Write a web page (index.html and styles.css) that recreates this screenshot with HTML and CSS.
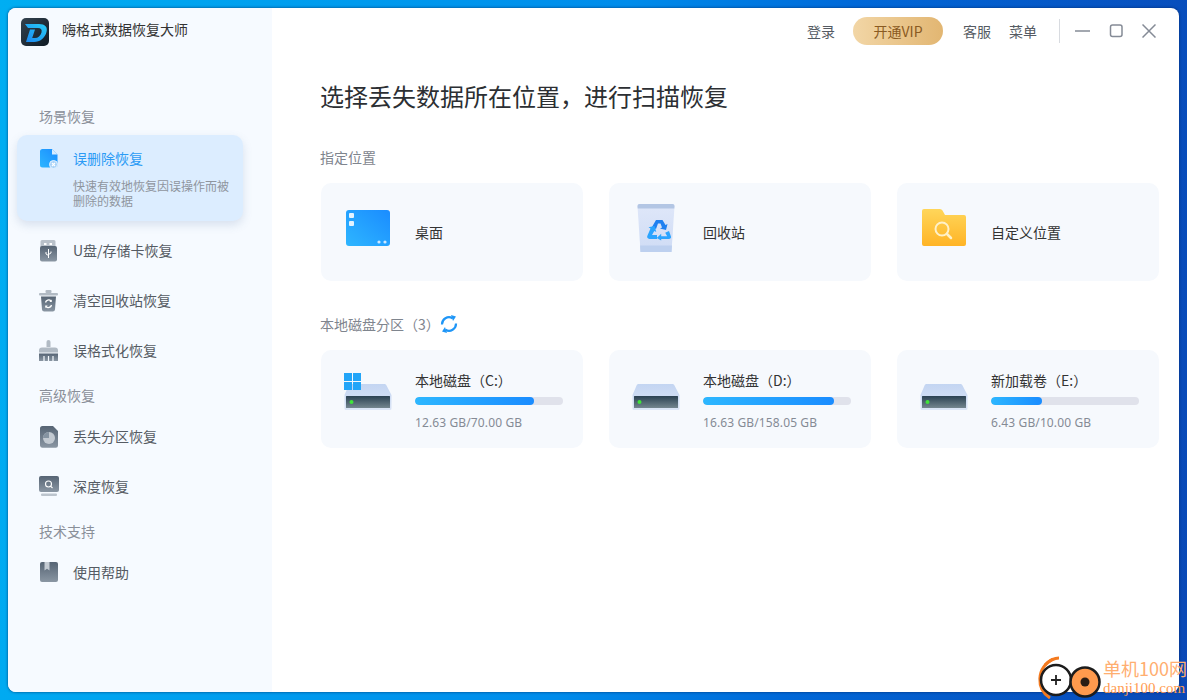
FILE: index.html
```html
<!DOCTYPE html>
<html lang="zh-CN">
<head>
<meta charset="utf-8">
<title>嗨格式数据恢复大师</title>
<link rel="stylesheet" href="styles.css">
</head>
<body>
<svg class="defs" width="0" height="0" aria-hidden="true">
  <defs>
    <linearGradient id="grey" x1="0" y1="0" x2="0" y2="1"><stop offset="0" stop-color="#566474"/><stop offset="1" stop-color="#8a96a3"/></linearGradient>
    <linearGradient id="blueH" x1="0" y1="1" x2="1" y2="0"><stop offset="0" stop-color="#2eb6ff"/><stop offset="1" stop-color="#1a8cff"/></linearGradient>
    <linearGradient id="panel" x1="0" y1="0" x2="0" y2="1"><stop offset="0" stop-color="#2a4152"/><stop offset="1" stop-color="#74868f"/></linearGradient>
    <linearGradient id="roof" x1="0" y1="0" x2="0" y2="1"><stop offset="0" stop-color="#c3d5f2"/><stop offset="1" stop-color="#dbe5f6"/></linearGradient>
    <linearGradient id="folder" x1="0" y1="0" x2="0" y2="1"><stop offset="0" stop-color="#ffd65a"/><stop offset="1" stop-color="#ffb426"/></linearGradient>
    <linearGradient id="bin" x1="0" y1="0" x2="0" y2="1"><stop offset="0" stop-color="#dfe7f9"/><stop offset="1" stop-color="#cfdcf5"/></linearGradient>
    <linearGradient id="logoBg" x1="0" y1="0" x2="1" y2="1"><stop offset="0" stop-color="#33424f"/><stop offset="1" stop-color="#0f1a24"/></linearGradient>
    <linearGradient id="logoD" x1="0" y1="1" x2="1" y2="0"><stop offset="0" stop-color="#1c86f0"/><stop offset="1" stop-color="#27cdf6"/></linearGradient>
    <symbol id="drive" viewBox="0 0 48 56">
      <path d="M6.500 13h34a2 2 0 0 1 1.600.8L47.500 24v13.500a1.500 1.500 0 0 1-1.500 1.500H2a1.500 1.500 0 0 1-1.500-1.500V24l4.400-10.200A2 2 0 0 1 6.500 13z" fill="url(#roof)"/>
      <rect x="2" y="25" width="44" height="12" rx=".5" fill="url(#panel)"/>
      <circle cx="7.500" cy="31" r="2" fill="#3fe43a"/>
    </symbol>
  </defs>
</svg>

<div class="window">
  <aside class="sidebar">
    <header class="brand">
      <svg class="brand-logo" viewBox="0 0 28 28" width="28" height="28">
        <rect width="28" height="28" rx="5" fill="url(#logoBg)"/>
        <path d="M4 6H18C24 6 27 9 25.500 14C24 20 19 24 13 24H5L9 11.500H14L11.200 20H14C17 20 19.500 18 20.500 14.500C21.200 11.500 20 10 17 10H7Z" fill="url(#logoD)"/>
      </svg>
      <span class="brand-name">嗨格式数据恢复大师</span>
    </header>

    <div class="nav-label nav-label-first">场景恢复</div>
    <div class="nav-item active">
      <div class="nav-row">
        <svg class="nav-icon" viewBox="0 0 20 20" width="20" height="20">
          <path d="M3.500 0h9.500l5.500 5.500V16a2.500 2.500 0 0 1-2.500 2.500h-12.500A2.500 2.500 0 0 1 1 16V2.500A2.500 2.500 0 0 1 3.500 0z" fill="url(#blueH)"/>
          <path d="M13 0l5.500 5.500H13z" fill="#d7ecff"/>
          <circle cx="14.500" cy="15.500" r="4" fill="#a9d3f8" stroke="#e4f2ff"/>
          <path d="M13 14l3 3m0-3l-3 3" stroke="#fff" stroke-width="1.100"/>
        </svg>
        <span class="nav-title">误删除恢复</span>
      </div>
      <p class="nav-desc">快速有效地恢复因误操作而被删除的数据</p>
    </div>
    <div class="nav-item">
      <div class="nav-row">
        <svg class="nav-icon" viewBox="0 0 20 22" width="20" height="22">
          <path d="M3 0h12a1.500 1.500 0 0 1 1.500 1.500V7h-15V1.500A1.500 1.500 0 0 1 3 0z" fill="#b9c1ca"/>
          <rect x="5" y="3" width="2.500" height="2" fill="#fff"/><rect x="10.500" y="3" width="2.500" height="2" fill="#fff"/>
          <rect x="1" y="6" width="17" height="15.500" rx="2" fill="url(#grey)"/>
          <path d="M9.500 9v9M7 12v2l2.500 1.500M12 11.500v1.500l-2.500 1.500" stroke="#fff" fill="none"/>
        </svg>
        <span class="nav-title">U盘/存储卡恢复</span>
      </div>
    </div>
    <div class="nav-item">
      <div class="nav-row">
        <svg class="nav-icon" viewBox="0 0 20 22" width="20" height="22">
          <rect x="0" y="3" width="19" height="2.500" rx="1" fill="#b1bac4"/><rect x="6.500" y="0" width="6" height="3" rx="1" fill="#b1bac4"/>
          <path d="M2 6.500h15l-1 13a2.200 2.200 0 0 1-2.200 2h-8.600a2.200 2.200 0 0 1-2.200-2z" fill="url(#grey)"/>
          <path d="M6.500 12.500a3.200 3.200 0 0 1 5.500-1.500M12.500 15a3.200 3.200 0 0 1-5.500 1.500" stroke="#fff" stroke-width="1.300" fill="none"/>
          <path d="M12.800 9.500v2.500h-2.500zM6.200 18v-2.500h2.500z" fill="#fff"/>
        </svg>
        <span class="nav-title">清空回收站恢复</span>
      </div>
    </div>
    <div class="nav-item">
      <div class="nav-row">
        <svg class="nav-icon" viewBox="0 0 20 22" width="20" height="22">
          <path d="M7.500 2a2 2 0 0 1 4 0V7h-4z" fill="#b1bac4"/>
          <path d="M3 7.500h13a3 3 0 0 1 3 3v2H0v-2a3 3 0 0 1 3-3z" fill="#b1bac4"/>
          <path d="M0 13.500h19V21H0z" fill="url(#grey)"/>
          <path d="M5 16v5M9.500 16v5M14 16v5" stroke="#f6faff" stroke-width="1.200"/>
        </svg>
        <span class="nav-title">误格式化恢复</span>
      </div>
    </div>

    <div class="nav-label">高级恢复</div>
    <div class="nav-item">
      <div class="nav-row">
        <svg class="nav-icon" viewBox="0 0 20 22" width="20" height="22">
          <path d="M3.500 0h10.500l5 5v14.500a2.200 2.200 0 0 1-2.200 2.200H3.500A2.500 2.500 0 0 1 1 19.500v-17A2.500 2.500 0 0 1 3.500 0z" fill="url(#grey)"/>
          <circle cx="10" cy="12" r="6" fill="#c2c9d1"/>
          <path d="M10 12V6a6 6 0 0 0-6 6z" fill="#8593a1"/>
        </svg>
        <span class="nav-title">丢失分区恢复</span>
      </div>
    </div>
    <div class="nav-item">
      <div class="nav-row">
        <svg class="nav-icon" viewBox="0 0 20 22" width="20" height="22">
          <rect x="0" y="0" width="20" height="16" rx="2" fill="url(#grey)"/>
          <circle cx="9.500" cy="8" r="3" stroke="#fff" fill="none" stroke-width="1.100"/>
          <path d="M11.800 10.300l1.700 1.700" stroke="#fff" stroke-width="1.100"/>
          <rect x="2" y="17.500" width="16" height="2.500" rx="1" fill="#bcc4cd"/>
        </svg>
        <span class="nav-title">深度恢复</span>
      </div>
    </div>

    <div class="nav-label">技术支持</div>
    <div class="nav-item">
      <div class="nav-row">
        <svg class="nav-icon" viewBox="0 0 20 22" width="20" height="22">
          <rect x="1" y="0" width="18" height="20" rx="2" fill="url(#grey)"/>
          <path d="M5.500 0h5v8.500L8 6.800l-2.500 1.700z" fill="#c4cbd3"/>
        </svg>
        <span class="nav-title">使用帮助</span>
      </div>
    </div>
  </aside>

  <main class="main">
    <div class="topbar">
      <span class="top-link">登录</span>
      <span class="vip">开通VIP</span>
      <span class="top-link top-link-gap">客服</span>
      <span class="top-link">菜单</span>
      <span class="divider"></span>
      <div class="win-controls">
        <svg viewBox="0 0 16 14" width="16" height="14"><path d="M1 7h15" stroke="#858b96" stroke-width="1.500"/></svg>
        <svg viewBox="0 0 14 14" width="14" height="14"><rect x="1.500" y="1" width="11.500" height="11.500" rx="2" fill="none" stroke="#858b96" stroke-width="1.500"/></svg>
        <svg viewBox="0 0 14 14" width="14" height="14"><path d="M.5.5l13 13m0-13l-13 13" stroke="#858b96" stroke-width="1.500"/></svg>
      </div>
    </div>

    <h1 class="heading">选择丢失数据所在位置，进行扫描恢复</h1>

    <div class="section-label">指定位置</div>
    <div class="cards">
      <div class="card">
        <svg class="card-icon" viewBox="0 0 48 56">
          <rect x="2" y="6" width="44" height="36" rx="3" fill="url(#blueH)"/>
          <rect x="5" y="9" width="5" height="5" rx="1" fill="#e3f3ff"/><rect x="5" y="17" width="5" height="5" rx="1" fill="#e3f3ff"/>
          <circle cx="35" cy="38" r="1.600" fill="#cfe9ff"/><circle cx="41" cy="38" r="1.600" fill="#cfe9ff"/>
        </svg>
        <span class="card-title">桌面</span>
      </div>
      <div class="card">
        <svg class="card-icon" viewBox="0 0 48 56">
          <path d="M7.500 0h33a2 2 0 0 1 2 2l-3 46h-31l-3-46a2 2 0 0 1 2-2z" fill="url(#bin)"/>
          <path d="M7.500 0h33a2 2 0 0 1 2 2l-.2 2.500H5.700L5.500 2a2 2 0 0 1 2-2z" fill="#b3c6e4"/>
          <path d="M8 41.500h32l-.5 6.500h-31z" fill="#bdd0ef"/>
          <path d="M20 23L24 16h6.500L33.500 21l2-1-1.500 6-6-1.500 2-1L28.500 19.500h-2.500L24 25z" fill="#1f80f0"/>
          <path d="M18.500 24.500l-2-1.200 6-1.200 1.800 6-2-1.200-2.300 4h5v4h-7.500c-2 0-3-1.500-2-3.300z" fill="#2aa4ff"/>
          <path d="M37 27l-3.800 1.800 2 3.400h-6v-2.500l-4.500 4.300 4.500 2.500V35h7.500c2 0 3-1.500 2-3.300z" fill="#2aa4ff"/>
        </svg>
        <span class="card-title">回收站</span>
      </div>
      <div class="card">
        <svg class="card-icon" viewBox="0 0 48 56">
          <path d="M4 5h16a3 3 0 0 1 2.500 1.500L25 11h19a2 2 0 0 1 2 2v27a2 2 0 0 1-2 2H4a2 2 0 0 1-2-2V7a2 2 0 0 1 2-2z" fill="url(#folder)"/>
          <circle cx="22" cy="25" r="6.500" fill="none" stroke="#fff1c9" stroke-width="2"/>
          <path d="M27 30l4 4" stroke="#fff1c9" stroke-width="2.500" stroke-linecap="round"/>
        </svg>
        <span class="card-title">自定义位置</span>
      </div>
    </div>

    <div class="section-label">
      本地磁盘分区（3）
      <svg class="refresh" viewBox="0 0 18 18" width="18" height="18">
        <path d="M2 9.500a7 7 0 0 1 10.500-6.300M16 8.500a7 7 0 0 1-10.500 6.300" fill="none" stroke="#1f96f7" stroke-width="2.200"/>
        <path d="M11 0l5 1.500-3 4.500zM7 18l-5-1.500 3-4.500z" fill="#1f96f7"/>
      </svg>
    </div>
    <div class="cards">
      <div class="card">
        <svg class="card-icon" viewBox="0 0 48 56">
          <use href="#drive"/>
          <path d="M0 2h8v8H0zM9 2h8v8H9zM0 11h8v8H0zM9 11h8v8H9z" fill="#22a5f8"/>
        </svg>
        <div class="disk">
          <span class="card-title">本地磁盘（C:）</span>
          <div class="bar"><div class="bar-fill" style="width:80.4%"></div></div>
          <span class="disk-size">12.63 GB/70.00 GB</span>
        </div>
      </div>
      <div class="card">
        <svg class="card-icon" viewBox="0 0 48 56"><use href="#drive"/></svg>
        <div class="disk">
          <span class="card-title">本地磁盘（D:）</span>
          <div class="bar"><div class="bar-fill" style="width:88.5%"></div></div>
          <span class="disk-size">16.63 GB/158.05 GB</span>
        </div>
      </div>
      <div class="card">
        <svg class="card-icon" viewBox="0 0 48 56"><use href="#drive"/></svg>
        <div class="disk">
          <span class="card-title">新加载卷（E:）</span>
          <div class="bar"><div class="bar-fill" style="width:34.5%"></div></div>
          <span class="disk-size">6.43 GB/10.00 GB</span>
        </div>
      </div>
    </div>
  </main>
</div>

<div class="watermark">
  <svg viewBox="0 0 66 44" width="66" height="44">
    <path d="M13 42C-1 33-1 12 16 3" fill="none" stroke="#f47a1f" stroke-width="3"/>
    <path d="M8 9c5-5 10-7 14-7" fill="none" stroke="#f47a1f" stroke-width="3"/>
    <circle cx="19" cy="24" r="15" fill="#fff" stroke="#1c1c1c" stroke-width="2.500"/>
    <path d="M19 19v10M14 24h10" stroke="#222" stroke-width="1.800"/>
    <circle cx="48" cy="26" r="14.500" fill="#ff9a4d" stroke="#1c1c1c" stroke-width="2.500" />
    <circle cx="48" cy="26" r="4.500" fill="#2b1d14"/>
  </svg>
  <div class="wm-text">
    <span class="wm-cn">单机100网</span>
    <span class="wm-en">danji100.com</span>
  </div>
</div>
</body>
</html>
```

FILE: styles.css
```css
* { box-sizing: border-box; }
html, body { margin: 0; height: 100%; }
body {
  padding: 8px;
  height: 700px;
  overflow: hidden;
  position: relative;
  font-family: "Noto Sans CJK SC", "Noto Sans", sans-serif;
  background: linear-gradient(96deg, #00aef2 0%, #008ceb 50%, #0068d8 68%, #0a48b6 100%);
}
.defs { position: absolute; }

.window {
  display: flex;
  height: 684px;
  background: #fff;
  border-radius: 8px;
  overflow: hidden;
  box-shadow: 0 0 3px rgba(0, 30, 80, .75);
}

.sidebar {
  width: 264px;
  flex: none;
  background: #f6faff;
}
.brand {
  display: flex;
  align-items: flex-start;
  height: 99px;
  padding: 10px 0 0 13px;
}
.brand-logo { flex: none; }
.brand-name {
  margin: 1px 0 0 13px;
  font-size: 14px;
  line-height: 20px;
  color: #333;
}

.nav-label {
  margin: 10px 0 8px 31px;
  font-size: 14px;
  line-height: 18px;
  color: #8a8f99;
}
.nav-label-first { margin-top: 0; margin-bottom: 10px; }

.nav-item {
  width: 226px;
  min-height: 50px;
  margin-left: 9px;
  padding: 0 12px 0 22px;
  display: flex;
  flex-direction: column;
  justify-content: center;
}
.nav-item.active {
  height: 86px;
  margin-bottom: 5px;
  padding-top: 12px;
  justify-content: flex-start;
  background: #dcedff;
  border-radius: 10px;
  box-shadow: 0 4px 10px rgba(80, 110, 160, .18);
}
.nav-row {
  display: flex;
  align-items: center;
  gap: 14px;
}
.nav-icon { flex: none; }
.nav-title {
  font-size: 14px;
  line-height: 22px;
  padding-bottom: 2px;
  color: #555b63;
}
.active .nav-title { color: #2b9bf5; }
.nav-desc {
  margin: 7px 0 0 34px;
  font-size: 12px;
  line-height: 15px;
  color: #8f959e;
}

.main {
  flex: 1;
  padding-left: 48px;
  min-width: 0;
}
.topbar {
  display: flex;
  align-items: center;
  justify-content: flex-end;
  height: 46px;
  padding-right: 23px;
}
.top-link {
  font-size: 14px;
  line-height: 20px;
  color: #555b63;
  margin-right: 18px;
}
.top-link-gap { margin-left: 2px; }
.vip {
  width: 90px;
  height: 28px;
  margin-right: 18px;
  border-radius: 14px;
  background: linear-gradient(90deg, #f2d6a6, #e2b672);
  color: #8a5a22;
  font-size: 14px;
  line-height: 28px;
  text-align: center;
}
.divider {
  width: 1px;
  height: 24px;
  margin-left: 4px;
  background: #d8dbe0;
}
.win-controls {
  display: flex;
  align-items: center;
  gap: 19px;
  margin-left: 14px;
}

.heading {
  margin: 25px 0 0;
  font-size: 24px;
  line-height: 34px;
  font-weight: 400;
  color: #2c2f33;
}
.section-label {
  display: flex;
  align-items: center;
  margin-top: 34px;
  font-size: 14px;
  line-height: 20px;
  color: #7f858e;
}
.cards + .section-label { margin-top: 33px; }

.cards {
  display: grid;
  grid-template-columns: repeat(3, 262px);
  gap: 26px;
  margin: 16px 0 0 1px;
}
.card {
  display: flex;
  align-items: center;
  gap: 23px;
  height: 98px;
  padding-left: 23px;
  background: #f6f9fd;
  border-radius: 10px;
}
.card-icon {
  flex: none;
  width: 48px;
  height: 56px;
}
.card-title {
  display: block;
  font-size: 14px;
  line-height: 20px;
  color: #333;
}
.disk {
  width: 148px;
  margin-top: 4px;
}
.bar {
  height: 8px;
  margin-top: 7px;
  border-radius: 4px;
  background: #e0e2eb;
  overflow: hidden;
}
.bar-fill {
  height: 100%;
  border-radius: 4px;
  background: linear-gradient(90deg, #2db7ff, #1a8cff);
}
.disk-size {
  display: block;
  margin-top: 9px;
  font-family: "Noto Sans", "Noto Sans CJK SC", sans-serif;
  font-size: 12px;
  line-height: 18px;
  letter-spacing: .12px;
  color: #858b95;
}

.watermark {
  position: absolute;
  left: 1037px;
  top: 656px;
  display: flex;
}
.wm-text {
  display: flex;
  flex-direction: column;
  margin-top: 2px;
}
.wm-cn {
  font-size: 18px;
  line-height: 20px;
  color: #ffae70;
}
.wm-en {
  font-family: "Liberation Serif", serif;
  font-size: 15px;
  line-height: 20px;
  color: #ff9c52;
}
```
